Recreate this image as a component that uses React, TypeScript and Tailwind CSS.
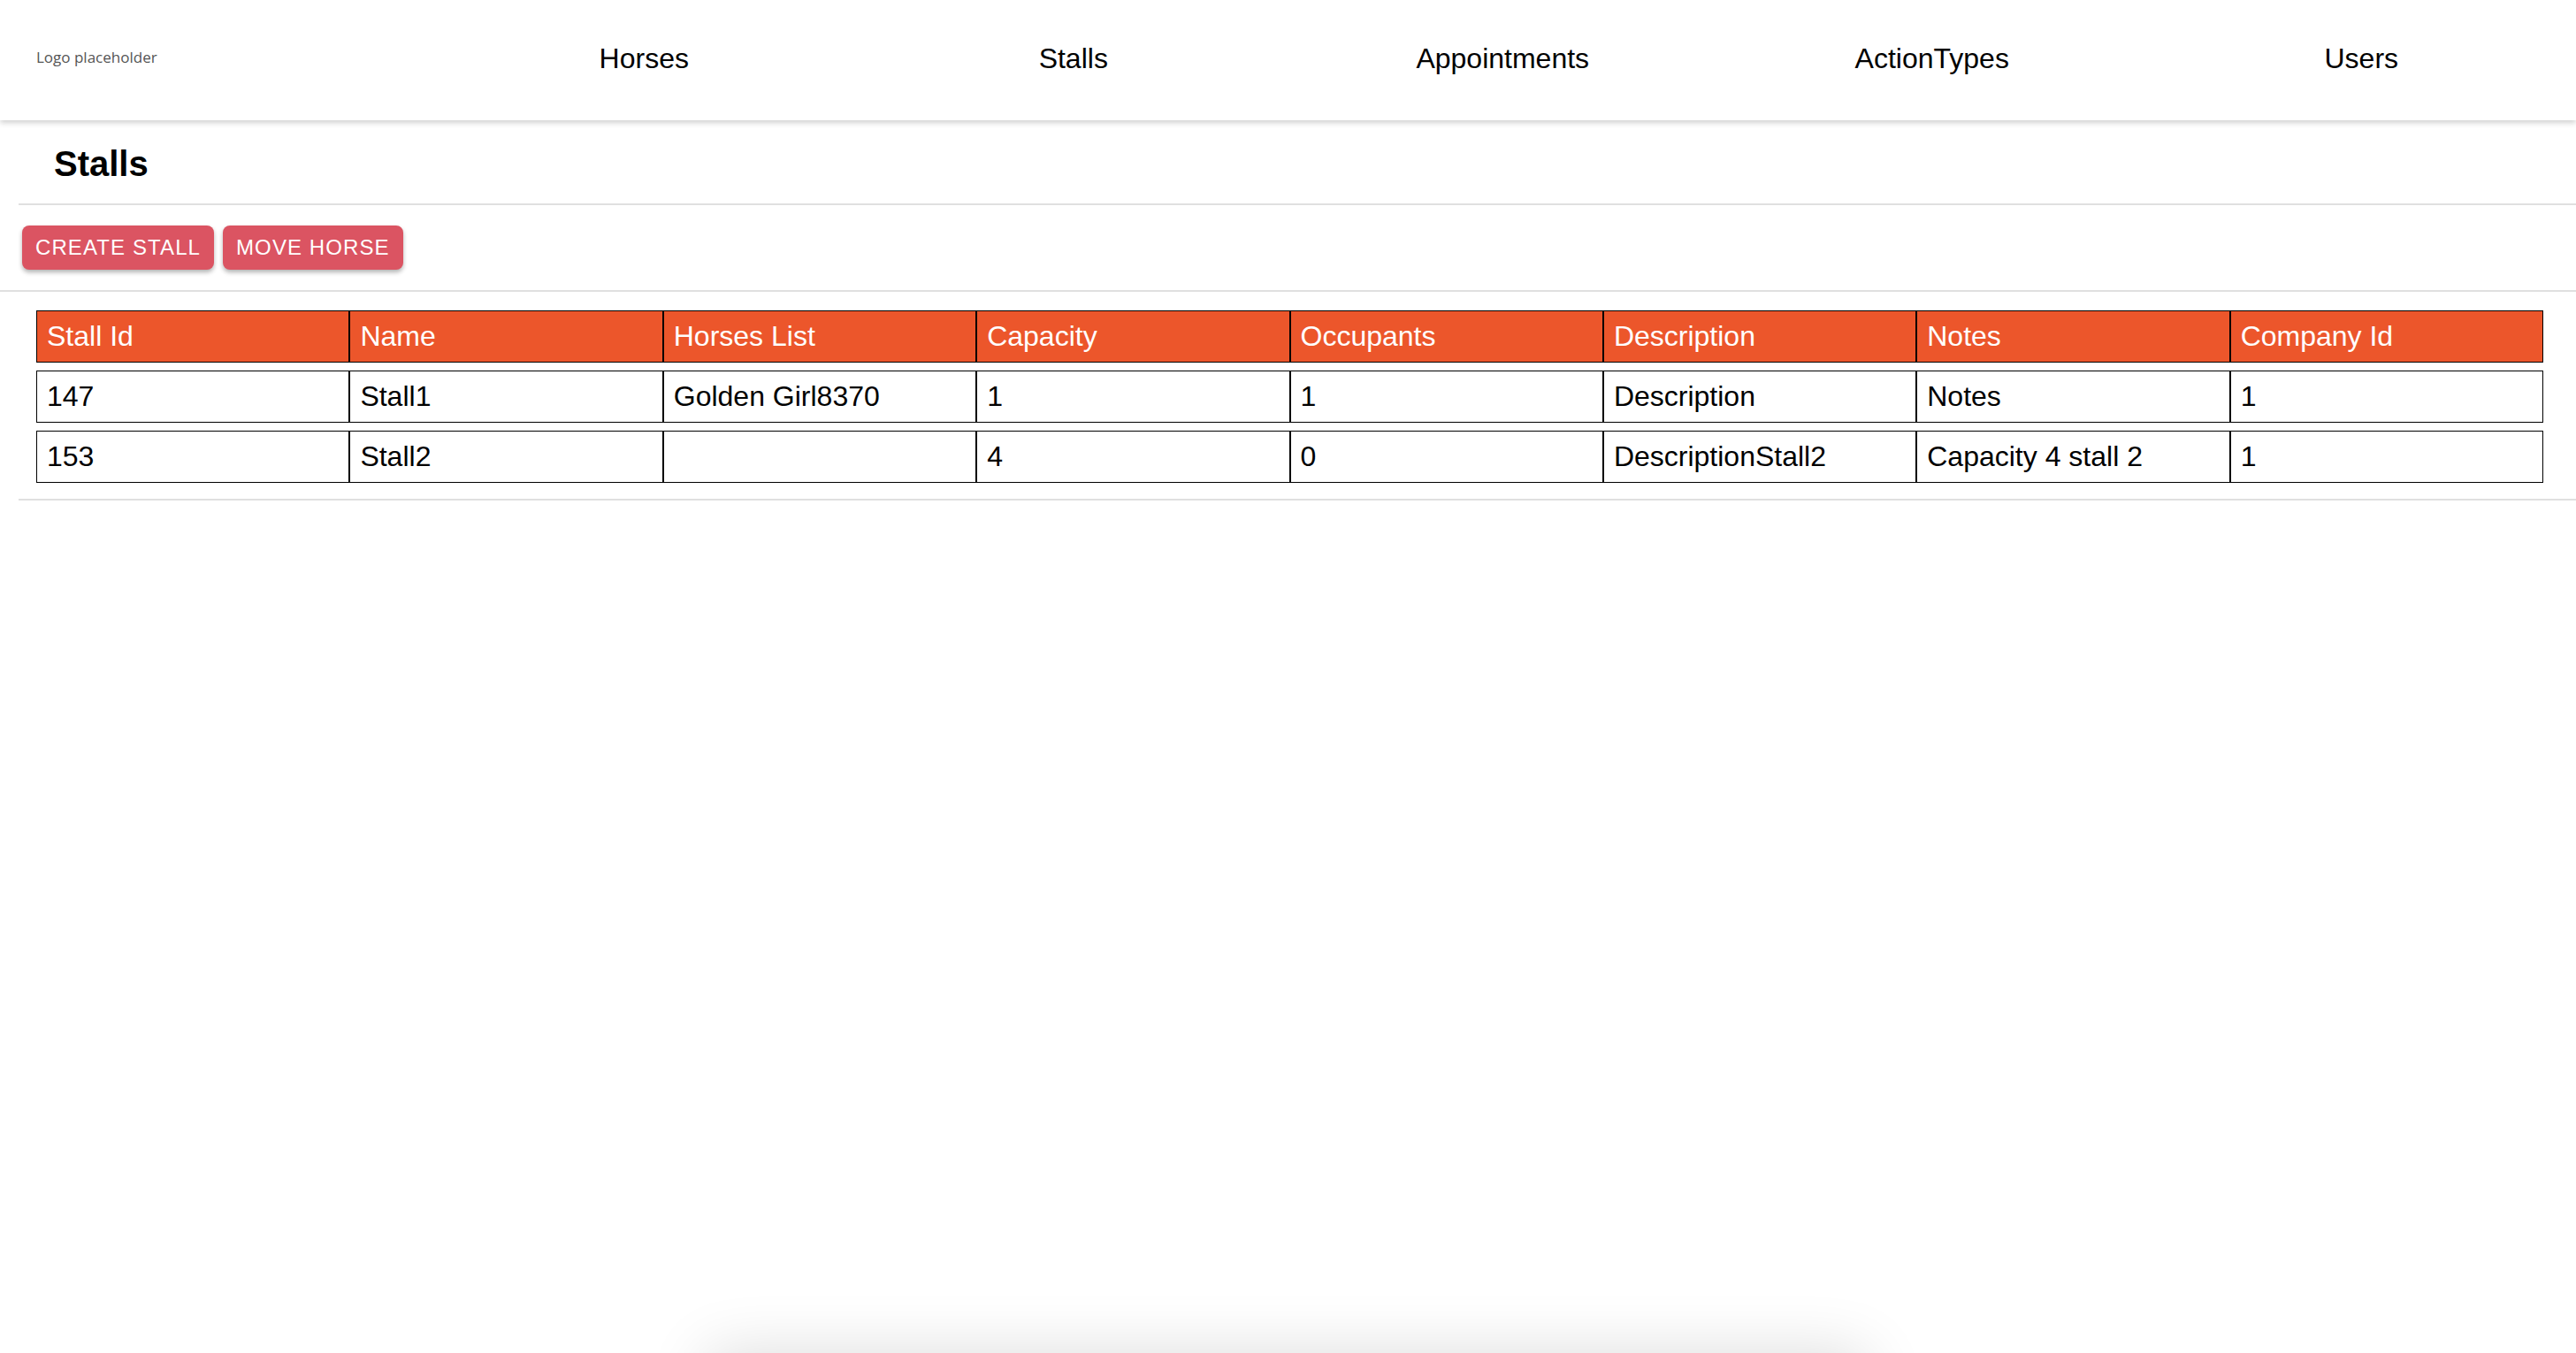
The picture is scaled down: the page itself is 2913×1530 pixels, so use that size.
import React from 'react'

const NAV = ['Horses', 'Stalls', 'Appointments', 'ActionTypes', 'Users']

const COLUMNS = ['Stall Id', 'Name', 'Horses List', 'Capacity', 'Occupants', 'Description', 'Notes', 'Company Id']

const STALLS = [
  ['147', 'Stall1', 'Golden Girl8370', '1', '1', 'Description', 'Notes', '1'],
  ['153', 'Stall2', '', '4', '0', 'DescriptionStall2', 'Capacity 4 stall 2', '1'],
]

export default function App() {
  return (
    <div className="relative min-h-[1530px] overflow-hidden bg-white font-['Liberation_Sans',Arial,sans-serif] text-black">
      {/* Top bar */}
      <header className="relative z-10 grid h-[136px] grid-cols-6 items-center bg-white shadow-[0_3px_6px_rgba(0,0,0,0.18)]">
        <div className="pl-[41px] pb-[6px] font-['Open_Sans',sans-serif] text-[17px] text-[#555]">Logo placeholder</div>
        {NAV.map((item) => (
          <a key={item} className="pb-[5px] text-center text-[32px] leading-none">
            {item}
          </a>
        ))}
      </header>

      <section className="ml-[21px]">
        <div className="h-[96px] border-b-2 border-[#e0e0e0] pl-[40px] pt-[25px]">
          <h1 className="text-[40px] font-semibold leading-[48px]">Stalls</h1>
        </div>
      </section>

      <div className="flex h-[98px] gap-[10px] border-b-2 border-[#e0e0e0] pl-[25px] pt-[23px]">
        <button className="h-[50px] rounded-[8px] bg-[#db5462] px-[15px] text-[24px] uppercase tracking-[1.1px] text-white shadow-[0_3px_5px_rgba(0,0,0,0.3)]">
          Create Stall
        </button>
        <button className="h-[50px] rounded-[8px] bg-[#db5462] px-[15px] text-[24px] uppercase tracking-[1.1px] text-white shadow-[0_3px_5px_rgba(0,0,0,0.3)]">
          Move Horse
        </button>
      </div>

      <section className="ml-[21px] border-b-2 border-[#e0e0e0] pb-[9px] pt-[12px]">
        <table className="ml-[20px] w-[2835px] table-fixed border-separate border-spacing-x-0 border-spacing-y-[9px] text-[32px]">
          <thead>
            <tr>
              {COLUMNS.map((c) => (
                <th
                  key={c}
                  className="h-[59px] border border-black bg-[#ec562b] px-[11px] text-left font-normal leading-[37px] text-white"
                >
                  {c}
                </th>
              ))}
            </tr>
          </thead>
          <tbody>
            {STALLS.map((row) => (
              <tr key={row[0]}>
                {row.map((cell, i) => (
                  <td key={i} className="h-[59px] border border-black px-[11px] leading-[37px]">
                    {cell}
                  </td>
                ))}
              </tr>
            ))}
          </tbody>
        </table>
      </section>

      {/* shadow of a panel sitting just below the fold */}
      <div className="absolute left-[800px] top-[1530px] h-[120px] w-[1310px] bg-white shadow-[0_0_70px_rgba(0,0,0,0.14)]" />
    </div>
  )
}
